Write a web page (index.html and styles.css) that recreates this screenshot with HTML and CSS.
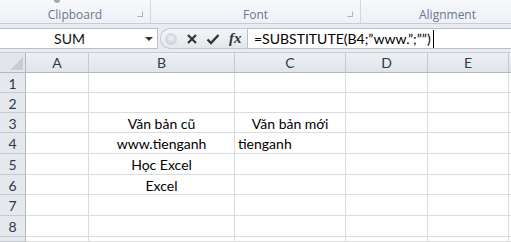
FILE: index.html
```html
<!DOCTYPE html>
<html lang="vi">
<head>
    <meta charset="UTF-8">
    <title>SUBSTITUTE</title>
    <link rel="stylesheet" href="styles.css">
</head>
<body>
    <div class="ribbon">
        <div class="group clipboard">
            <span class="stub"></span>
            <span class="group-label">Clipboard</span>
            <span class="launcher"></span>
        </div>
        <div class="group font">
            <span class="group-label">Font</span>
            <span class="launcher"></span>
        </div>
        <div class="group alignment">
            <span class="group-label">Alignment</span>
        </div>
    </div>

    <div class="formula-bar">
        <div class="name-box">
            <span class="name">SUM</span>
            <span class="arrow"></span>
        </div>
        <div class="buttons">
            <span class="knob"></span>
            <svg class="btn" width="12" height="12" viewBox="0 0 12 12">
                <path d="M2 2 L10 10 M10 2 L2 10" stroke="#333" stroke-width="2.2" fill="none"/>
            </svg>
            <svg class="btn" width="14" height="12" viewBox="0 0 14 12">
                <path d="M1.5 6.5 L5 10 L12.5 2" stroke="#333" stroke-width="2.4" fill="none"/>
            </svg>
            <span class="fx">fx</span>
        </div>
        <div class="formula">=SUBSTITUTE(B4;”www.”;””)<span class="caret"></span></div>
    </div>

    <div class="sheet">
        <div class="cell corner"><span class="tri"></span></div>
        <div class="cell col-head">A</div>
        <div class="cell col-head">B</div>
        <div class="cell col-head">C</div>
        <div class="cell col-head">D</div>
        <div class="cell col-head">E</div>
        <div class="cell col-head"></div>

        <div class="cell row-head">1</div>
        <div class="cell"></div><div class="cell"></div><div class="cell"></div><div class="cell"></div><div class="cell"></div><div class="cell"></div>

        <div class="cell row-head">2</div>
        <div class="cell"></div><div class="cell"></div><div class="cell"></div><div class="cell"></div><div class="cell"></div><div class="cell"></div>

        <div class="cell row-head">3</div>
        <div class="cell"></div>
        <div class="cell center">Văn bản cũ</div>
        <div class="cell center">Văn bản mới</div>
        <div class="cell"></div><div class="cell"></div><div class="cell"></div>

        <div class="cell row-head">4</div>
        <div class="cell"></div>
        <div class="cell center">www.tienganh</div>
        <div class="cell">tienganh</div>
        <div class="cell"></div><div class="cell"></div><div class="cell"></div>

        <div class="cell row-head">5</div>
        <div class="cell"></div>
        <div class="cell center">Học Excel</div>
        <div class="cell"></div><div class="cell"></div><div class="cell"></div><div class="cell"></div>

        <div class="cell row-head">6</div>
        <div class="cell"></div>
        <div class="cell center">Excel</div>
        <div class="cell"></div><div class="cell"></div><div class="cell"></div><div class="cell"></div>

        <div class="cell row-head">7</div>
        <div class="cell"></div><div class="cell"></div><div class="cell"></div><div class="cell"></div><div class="cell"></div><div class="cell"></div>

        <div class="cell row-head">8</div>
        <div class="cell"></div><div class="cell"></div><div class="cell"></div><div class="cell"></div><div class="cell"></div><div class="cell"></div>

        <div class="cell row-head"></div>
        <div class="cell"></div><div class="cell"></div><div class="cell"></div><div class="cell"></div><div class="cell"></div><div class="cell"></div>
    </div>
</body>
</html>
```

FILE: styles.css
```css
:root {
    --grid-color: #dadcdd;
    --head-border: #b1b7bf;
    --ui-text: #6b7888;
}

* {
    box-sizing: border-box;
}

body {
    margin: 0;
    width: 511px;
    height: 242px;
    overflow: hidden;
    background: #fff;
    font-family: "Lato", "Open Sans", sans-serif;
}

/* ribbon */

.ribbon {
    display: flex;
    height: 24px;
    background: linear-gradient(#f6f8fb, #eef1f6);
    border-bottom: 1px solid #c6ccd4;
}

.group {
    position: relative;
    display: flex;
    align-items: flex-end;
    justify-content: center;
    padding-bottom: 1px;
    border-right: 1px solid #d3d9e1;
}

.clipboard {
    width: 151px;
}

.font {
    width: 210px;
}

.alignment {
    flex: 1;
    border-right: none;
    justify-content: flex-start;
    padding-left: 58px;
}

.group-label {
    font-family: "Open Sans", sans-serif;
    font-size: 12px;
    color: var(--ui-text);
    line-height: 15px;
}

.launcher {
    position: absolute;
    right: 7px;
    bottom: 6px;
    width: 6px;
    height: 6px;
    border: 1px solid #a9b1bc;
    border-left-color: transparent;
    border-top-color: transparent;
}

.stub {
    position: absolute;
    left: 54px;
    top: 0;
    width: 6px;
    height: 3px;
    background: #a5a9ae;
    border-radius: 0 0 3px 3px;
}

/* formula bar */

.formula-bar {
    display: flex;
    align-items: stretch;
    height: 29px;
    padding: 4px 0 3px;
    background: #e8ebf0;
    border-bottom: 1px solid #c6ccd4;
}

.name-box {
    position: relative;
    width: 158px;
    display: flex;
    align-items: center;
    justify-content: center;
    background: #fff;
    border: 1px solid #b8c0ca;
    border-left: none;
}

.name {
    font-family: "Lato", sans-serif;
    font-size: 14px;
    color: #111;
    margin-right: 18px;
}

.arrow {
    position: absolute;
    right: 4px;
    top: 8px;
    border-left: 4px solid transparent;
    border-right: 4px solid transparent;
    border-top: 4px solid #333;
}

.buttons {
    width: 87px;
    margin-left: 2px;
    display: flex;
    align-items: center;
    gap: 8px;
    padding-left: 4px;
    background: linear-gradient(#f3f5f8, #e3e7ec);
    border: 1px solid #c3c9d1;
    border-right: none;
    border-radius: 10px 0 0 10px;
}

.knob {
    width: 12px;
    height: 12px;
    border-radius: 50%;
    background: radial-gradient(circle at 50% 40%, #f0f1f3, #c3c7cc);
    border: 1px solid #d3d6da;
    margin-right: 1px;
}

.btn {
    display: block;
}

.fx {
    font-family: "Liberation Serif", serif;
    font-style: italic;
    font-weight: bold;
    font-size: 15px;
    color: #333;
    margin-left: 1px;
}

.formula {
    flex: 1;
    display: flex;
    align-items: center;
    padding-left: 6px;
    background: #fff;
    border: 1px solid #b8c0ca;
    border-right: none;
    font-size: 14px;
    color: #000;
}

.caret {
    width: 1px;
    height: 18px;
    background: #000;
    margin-left: 2px;
}

/* sheet */

.sheet {
    display: grid;
    grid-template-columns: 26px 63px 146px 111px 82px 81px 1fr;
    grid-template-rows: 20px 20px 20px 20px 21px 21px 20px 21px 21px 1fr;
    height: 189px;
}

.cell {
    border-right: 1px solid var(--grid-color);
    border-bottom: 1px solid var(--grid-color);
    font-size: 14px;
    line-height: 21px;
    color: #000;
    white-space: nowrap;
    padding-left: 3px;
}

.center {
    text-align: center;
    padding-left: 0;
}

.col-head {
    text-align: center;
    padding-left: 0;
    background: linear-gradient(#eef0f3, #e0e4e9);
    border-right-color: #c5cad1;
    border-bottom-color: var(--head-border);
    color: #2f3a47;
    line-height: 19px;
}

.row-head {
    text-align: center;
    padding-left: 0;
    background: #e5e8ed;
    border-right-color: var(--head-border);
    border-bottom-color: #c5cad1;
    color: #2f3a47;
}

.corner {
    position: relative;
    background: #e2e5ea;
    border-right-color: var(--head-border);
    border-bottom-color: var(--head-border);
}

.tri {
    position: absolute;
    right: 2px;
    bottom: 2px;
    border-left: 13px solid transparent;
    border-bottom: 13px solid #c9cdd2;
}
```
